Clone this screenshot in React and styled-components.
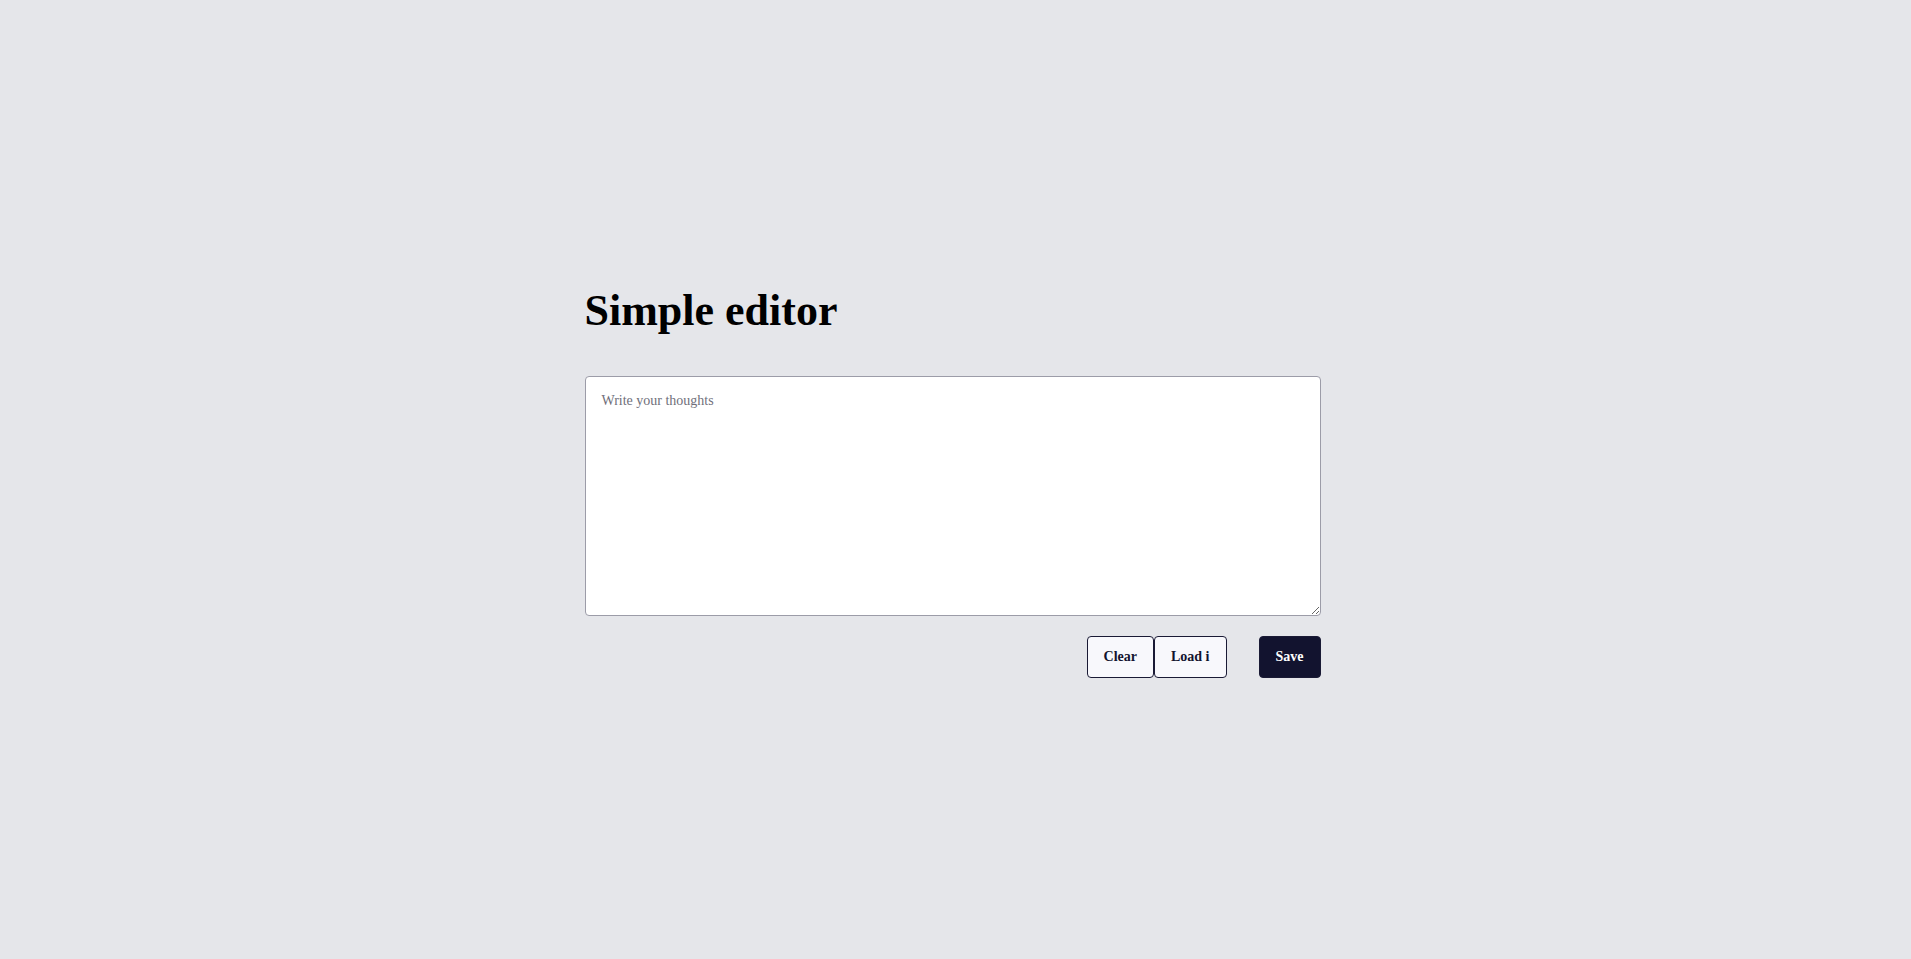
import React, { useState } from "react";
import styled, { createGlobalStyle } from "styled-components";

const GlobalStyle = createGlobalStyle`
  body {
    margin: 0;
    background: #e5e6ea;
    font-family: "Liberation Serif", "Times New Roman", serif;
    color: #000;
  }
`;

const Page = styled.main`
  box-sizing: border-box;
  min-height: 100vh;
  padding: 3px 6px 0 0;
  display: flex;
  align-items: center;
  justify-content: center;
`;

const Editor = styled.section`
  width: 736px;
  display: flex;
  flex-direction: column;
`;

const Title = styled.h1`
  margin: 0 0 40px;
  font-size: 44px;
  font-weight: 700;
  line-height: normal;
`;

const TextArea = styled.textarea`
  box-sizing: border-box;
  width: 100%;
  height: 240px;
  padding: 16px;
  border: 1px solid #9c9ca8;
  border-radius: 4px;
  background: #fff;
  font-family: inherit;
  font-size: 14px;
  color: #111;
  resize: vertical;
  outline: none;

  &::placeholder {
    color: #6f6f7a;
  }
`;

const Actions = styled.div`
  display: flex;
  justify-content: flex-end;
  gap: 32px;
  margin-top: 20px;
`;

const Group = styled.div`
  display: flex;
`;

const Button = styled.button`
  height: 42px;
  padding: 0 16px;
  border-radius: 4px;
  border: 1px solid #1a1a35;
  font-family: inherit;
  font-size: 14px;
  font-weight: 700;
  cursor: pointer;
  background: ${(p) => (p.$primary ? "#12132f" : "#f8f8fc")};
  color: ${(p) => (p.$primary ? "#fff" : "#12132f")};
`;

export default function App() {
  const [text, setText] = useState("");

  return (
    <>
      <GlobalStyle />
      <Page>
        <Editor>
          <Title>Simple editor</Title>
          <TextArea
            placeholder="Write your thoughts"
            value={text}
            onChange={(e) => setText(e.target.value)}
          />
          <Actions>
            <Group>
              <Button onClick={() => setText("")}>Clear</Button>
              <Button>Load i</Button>
            </Group>
            <Button $primary>Save</Button>
          </Actions>
        </Editor>
      </Page>
    </>
  );
}
